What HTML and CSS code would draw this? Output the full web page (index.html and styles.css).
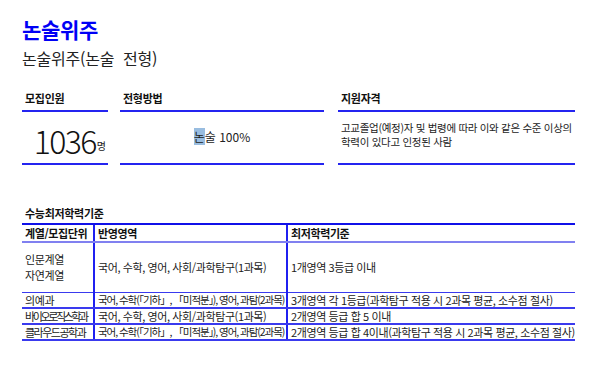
FILE: index.html
```html
<!DOCTYPE html>
<html lang="ko">
<head>
<meta charset="utf-8">
<link rel="stylesheet" href="styles.css">
</head>
<body>
<div class="page">
  <h1 class="title">논술위주</h1>
  <h2 class="subtitle">논술위주(논술&nbsp; 전형)</h2>

  <div class="summary">
    <div class="block b-count">
      <div class="label">모집인원</div>
      <div class="body count"><span class="num">1036</span><span class="unit">명</span></div>
    </div>
    <div class="block b-method">
      <div class="label">전형방법</div>
      <div class="body method"><span class="sel">논</span>술 100%</div>
    </div>
    <div class="block b-qual">
      <div class="label">지원자격</div>
      <div class="body qual">고교졸업(예정)자 및 법령에 따라 이와 같은 수준 이상의 학력이 있다고 인정된 사람</div>
    </div>
  </div>

  <div class="section-title">수능최저학력기준</div>
  <table class="grid">
    <colgroup><col class="c1"><col class="c2"><col class="c3"></colgroup>
    <thead>
      <tr><th>계열/모집단위</th><th>반영영역</th><th>최저학력기준</th></tr>
    </thead>
    <tbody>
      <tr class="tall"><td>인문계열<br>자연계열</td><td>국어, 수학, 영어, 사회/과학탐구(1과목)</td><td>1개영역 3등급 이내</td></tr>
      <tr><td>의예과</td><td class="dense">국어, 수학(「기하」, 「미적분」), 영어, 과탐(2과목)</td><td>3개영역 각 1등급(과학탐구 적용 시 2과목 평균, 소수점 절사)</td></tr>
      <tr><td class="tight">바이오로직스학과</td><td>국어, 수학, 영어, 사회/과학탐구(1과목)</td><td>2개영역 등급 합 5 이내</td></tr>
      <tr><td class="mid">클라우드공학과</td><td class="dense">국어, 수학(「기하」, 「미적분」), 영어, 과탐(2과목)</td><td>2개영역 등급 합 4이내(과학탐구 적용 시 2과목 평균, 소수점 절사)</td></tr>
    </tbody>
  </table>
</div>
</body>
</html>
```

FILE: styles.css
```css
* { box-sizing: border-box; }
html, body { margin: 0; padding: 0; background: #fff; }
body {
  font-family: "Noto Sans CJK KR", "Noto Sans", sans-serif;
  color: #222;
}
.page { padding: 14px 22px 0 22px; width: 597px; }
.title {
  margin: 0;
  font-size: 21px;
  line-height: 30px;
  font-weight: 700;
  color: #0000f5;
  letter-spacing: -0.3px;
}
.subtitle {
  margin: 4px 0 0 0;
  font-size: 16px;
  line-height: 21px;
  font-weight: 400;
  color: #222;
  letter-spacing: -0.2px;
}
.summary {
  display: flex;
  margin-top: 21px;
}
.block { display: flex; flex-direction: column; }
.b-count { width: 86px; margin-right: 12px; }
.b-method { width: 204px; margin-right: 14px; }
.b-qual { width: 237px; }
.label {
  font-size: 11px;
  font-weight: 700;
  line-height: 16px;
  padding: 0 0 4px 3px;
  border-bottom: 2px solid #2424f0;
  color: #111;
  letter-spacing: -0.3px;
}
.body {
  height: 53px;
  border-bottom: 2px solid #2424f0;
  display: flex;
  align-items: center;
}
.count { justify-content: flex-end; padding-right: 2px; padding-top: 4px; }
.num { font-size: 32px; font-weight: 300; color: #111; letter-spacing: -1.6px; line-height: 1; }
.unit { font-size: 10px; align-self: center; margin-top: 12px; margin-left: 1px; }
.method { justify-content: center; font-size: 12px; padding-bottom: 2px; }
.sel { background: #99bde0; }
.qual {
  font-size: 10.5px;
  line-height: 14px;
  padding: 0 0 6px 3px;
  letter-spacing: -0.3px;
}
.section-title {
  margin-top: 40px;
  font-size: 11px;
  font-weight: 700;
  line-height: 16px;
  padding-left: 3px;
  color: #111;
  letter-spacing: -0.3px;
}
.grid {
  margin-top: 2px;
  width: 553px;
  border-collapse: collapse;
  table-layout: fixed;
  font-size: 11px;
  letter-spacing: -0.4px;
}
.c1 { width: 72px; }
.c2 { width: 193px; }
.c3 { width: 288px; }
.grid th {
  text-align: left;
  font-weight: 700;
  height: 17px;
  padding: 0 3px;
  border-top: 2px solid #1010e8;
  border-bottom: 2px solid #8080f0;
  color: #111;
  white-space: nowrap;
}
.grid th + th, .grid td + td { border-left: 2px solid #2020f0; }
.grid td {
  height: 16px;
  padding: 0 3px;
  border-bottom: 2px solid #3a3aee;
  white-space: nowrap;
  overflow: hidden;
  line-height: 14px;
}
.grid tr.tall td { height: 50px; line-height: 16px; }
.grid tbody tr:first-child td { border-bottom: 1px solid #3a3aee; }
.grid td.tight { letter-spacing: -2.4px; padding-right: 0; }
.grid td.mid { letter-spacing: -1.5px; padding-right: 0; }
.grid td.dense { font-size: 10.5px; letter-spacing: -1.05px; padding-right: 0; }
```
